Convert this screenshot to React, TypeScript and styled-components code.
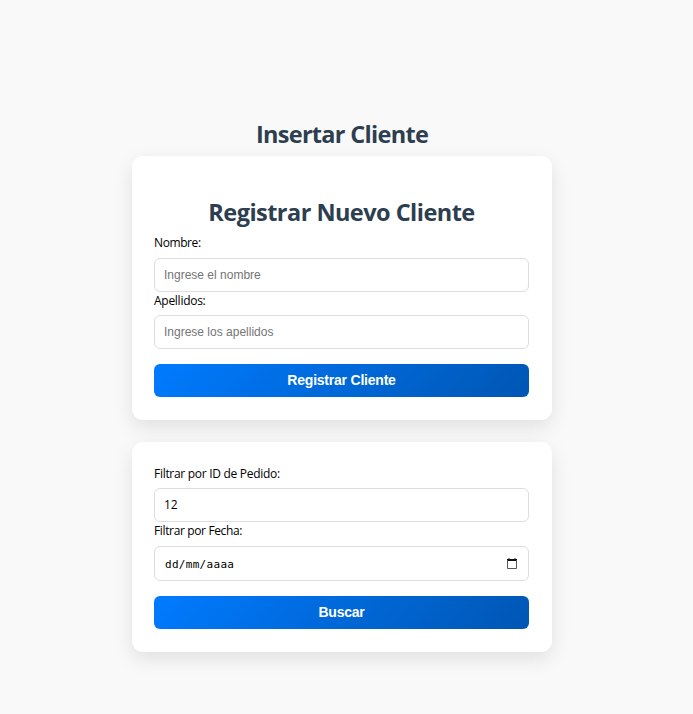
import React from "react";
import styled, { createGlobalStyle } from "styled-components";

const GlobalStyle = createGlobalStyle`
  *, *::before, *::after { box-sizing: border-box; }
  body {
    margin: 0;
    background: #f9f9f9;
    font-family: "Segoe UI", "Open Sans", "Noto Sans", sans-serif;
    color: #000;
  }
`;

const Page = styled.main`
  height: 714px;
  width: 684px;
  padding-top: 118px;
  display: flex;
  flex-direction: column;
  align-items: center;
  overflow: hidden;
`;

const Title = styled.h2<{ $tracking: number }>`
  margin: 0;
  height: 32px;
  line-height: 32px;
  text-align: center;
  white-space: nowrap;
  font-size: 23.5px;
  font-weight: 700;
  letter-spacing: ${(p) => p.$tracking}px;
  color: #2c3e50;
`;

const PageTitle = styled(Title)`
  margin-bottom: 6px;
`;

const Card = styled.form<{ $height: number; $top: number }>`
  width: 420px;
  height: ${(p) => p.$height}px;
  flex: none;
  padding: ${(p) => p.$top}px 23px 0 22px;
  border-radius: 11px;
  background: #fff;
  box-shadow: 0 7px 19px rgba(0, 0, 0, 0.1);

  & + & { margin-top: 22px; }
`;

const Label = styled.label<{ $height?: number; $offset?: number; $tracking: number }>`
  display: block;
  height: ${(p) => p.$height ?? 23}px;
  padding-top: ${(p) => p.$offset ?? 0}px;
  line-height: 18px;
  font-size: 12px;
  letter-spacing: ${(p) => p.$tracking}px;
  white-space: nowrap;
`;

const Input = styled.input<{ $numeric?: boolean }>`
  display: block;
  width: 100%;
  height: 34px;
  padding: 0 9px ${(p) => (p.$numeric ? 2 : 0)}px;
  border: 1px solid #ddd;
  border-radius: 6px;
  outline: none;
  background: #fff;
  color: #000;
  font-family: ${(p) => (p.$numeric ? '"Open Sans"' : '"Liberation Sans"')}, sans-serif;
  font-size: 12px;

  &::placeholder { color: #757575; opacity: 1; }
`;

const DateField = styled.div`
  display: flex;
  align-items: center;
  justify-content: space-between;
  height: 35px;
  padding: 1px 11px 0 10px;
  border: 1px solid #ddd;
  border-radius: 6px;
  font-family: "DejaVu Sans Mono", monospace;
  font-size: 11px;
  letter-spacing: 0.3px;
`;

const CalendarIcon = styled.svg`
  width: 10px;
  height: 11px;
  display: block;
  margin-top: -1px;
`;

const Button = styled.button`
  display: block;
  width: 100%;
  height: 33px;
  margin-top: 15px;
  padding: 0 0 2px;
  border: 0;
  border-radius: 6px;
  background: linear-gradient(135deg, #007bff, #0056b3);
  color: #fff;
  font: 700 14px "Liberation Sans", sans-serif;
  letter-spacing: -0.22px;
`;

export default function App() {
  return (
    <>
      <GlobalStyle />
      <Page>
        <PageTitle $tracking={-0.7}>Insertar Cliente</PageTitle>
        <Card $height={264} $top={40}>
          <Title $tracking={-0.53}>Registrar Nuevo Cliente</Title>
          <Label htmlFor="nombre" $height={30} $offset={6} $tracking={-0.4}>Nombre:</Label>
          <Input id="nombre" placeholder="Ingrese el nombre" />
          <Label htmlFor="apellidos" $tracking={-0.27}>Apellidos:</Label>
          <Input id="apellidos" placeholder="Ingrese los apellidos" />
          <Button type="button">Registrar Cliente</Button>
        </Card>
        <Card $height={210} $top={23}>
          <Label htmlFor="pedido" $tracking={-0.29}>Filtrar por ID de Pedido:</Label>
          <Input id="pedido" $numeric defaultValue="12" />
          <Label htmlFor="fecha" $height={24} $tracking={-0.36}>Filtrar por Fecha:</Label>
          <DateField id="fecha">
            <span>dd/mm/aaaa</span>
            <CalendarIcon viewBox="0 0 10 11" fill="none">
              <path d="M2 0v2M8 0v2" stroke="#333" />
              <path d="M0 1h10v2H0z" fill="#111" />
              <path d="M.5 2v8.5h9V2" stroke="#555" />
            </CalendarIcon>
          </DateField>
          <Button type="button">Buscar</Button>
        </Card>
      </Page>
    </>
  );
}
